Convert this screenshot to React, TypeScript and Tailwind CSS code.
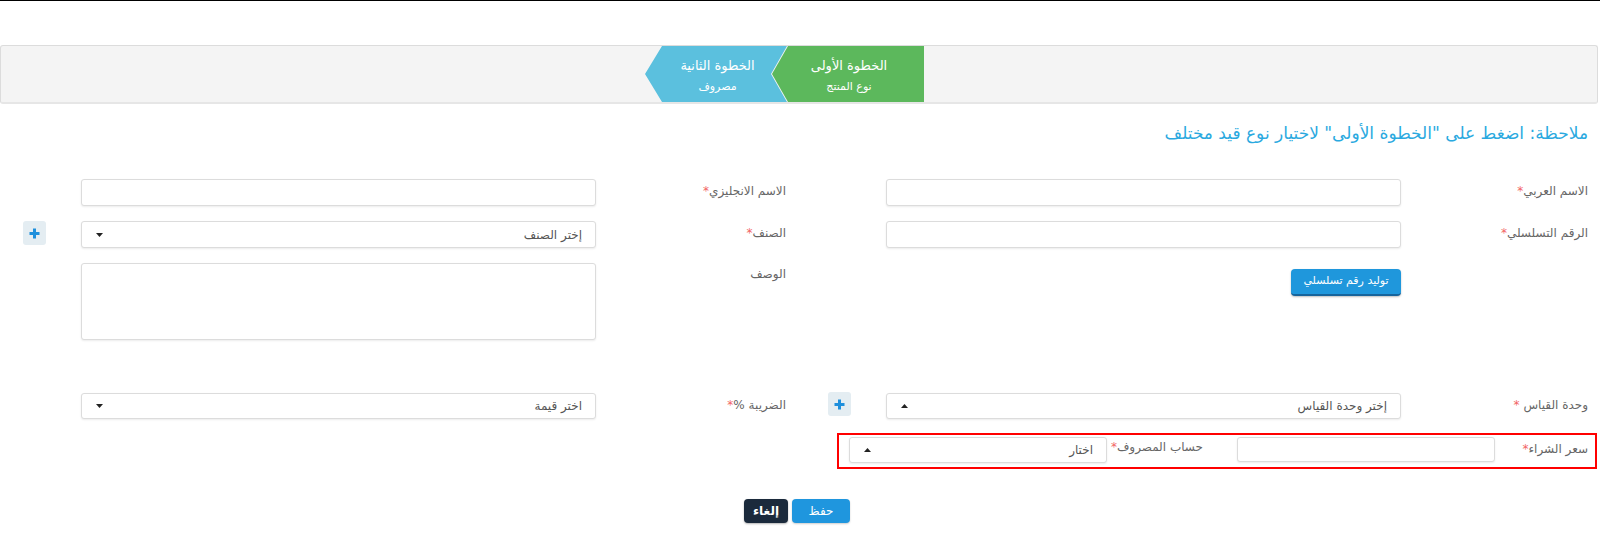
import React from "react";

const Star = () => <span className="text-[#f26464]">*</span>;

function Caret({ up }: { up?: boolean }) {
  return (
    <svg width="7" height="4" viewBox="0 0 7 4" className="block">
      {up ? <polygon points="0,4 7,4 3.5,0" fill="#222" /> : <polygon points="0,0 7,0 3.5,4" fill="#222" />}
    </svg>
  );
}

function Plus() {
  return (
    <div className="w-[23px] h-[24px] rounded-[3px] bg-[#e4edf2] flex items-center justify-center">
      <svg width="11" height="11" viewBox="0 0 11 11">
        <path d="M5.5 0.5 V10.5 M0.5 5.5 H10.5" stroke="#1e8fdc" strokeWidth="3" />
      </svg>
    </div>
  );
}

const inputCls =
  "bg-white border border-[#dcdcdc] rounded-[3px] shadow-[0_1px_2px_rgba(0,0,0,0.08)]";

function Select({ text, up, w, h }: { text: string; up?: boolean; w: string; h: string }) {
  return (
    <div className={`${inputCls} ${w} ${h} flex items-center justify-between pr-[13px] pl-[14px]`}>
      <span className="text-[12px] text-[#555]">{text}</span>
      <Caret up={up} />
    </div>
  );
}

function Label({ children, className }: { children: React.ReactNode; className: string }) {
  return <div className={`text-[12px] text-[#666] shrink-0 whitespace-nowrap ${className}`}>{children}</div>;
}

export default function App() {
  return (
    <div
      dir="rtl"
      className="w-[1600px] h-[551px] bg-white overflow-hidden font-['DejaVu_Sans',sans-serif] text-[#555]"
    >
      <div className="h-[1px] bg-black" />
      <div className="h-[44px]" />
      {/* steps bar */}
      <div className="h-[59px] mr-[2px] border border-[#dcdcdc] border-b-[2px] border-b-[#e6e6e6] rounded-[3px] bg-[#f4f4f4] flex">
        <div className="w-[673px] shrink-0" />
        <div className="w-[152px] shrink-0 h-full bg-[#5cb85c] [clip-path:polygon(16px_0,100%_0,100%_100%,16px_100%,0_50%)] flex flex-col items-center justify-center text-white pl-[2px] pt-[3px]">
          <div className="text-[13px] font-medium leading-[18px]">الخطوة الأولى</div>
          <div className="text-[11px] leading-[16px] mt-[4px]">نوع المنتج</div>
        </div>
        <div className="w-[143px] shrink-0 -mr-[16px] h-full bg-[#5bc0de] [clip-path:polygon(17px_0,142px_0,126px_50%,142px_100%,17px_100%,0_50%)] flex flex-col items-center justify-center text-white pl-[2px] pt-[3px]">
          <div className="text-[13px] font-medium leading-[18px]">الخطوة الثانية</div>
          <div className="text-[11px] leading-[16px] mt-[4px]">مصروف</div>
        </div>
      </div>

      {/* note */}
      <div className="mt-[17px] pr-[12px] text-[17px] leading-[24px] text-[#2aa9e0]">
        ملاحظة: اضغط على "الخطوة الأولى" لاختيار نوع قيد مختلف
      </div>

      {/* row 1 */}
      <div className="flex mt-[34px] h-[27px]">
        <Label className="w-[199px] pr-[12px] pt-[3px]">
          الاسم العربي<Star />
        </Label>
        <div className={`${inputCls} w-[515px] h-[27px] shrink-0`} />
        <div className="w-[86px] shrink-0" />
        <Label className="w-[204px] pr-[14px] pt-[3px]">
          الاسم الانجليزي<Star />
        </Label>
        <div className={`${inputCls} w-[515px] h-[27px] shrink-0`} />
      </div>

      {/* row 2 */}
      <div className="flex mt-[15px] h-[27px]">
        <Label className="w-[199px] pr-[12px] pt-[3px]">
          الرقم التسلسلي<Star />
        </Label>
        <div className={`${inputCls} w-[515px] h-[27px] shrink-0`} />
        <div className="w-[86px] shrink-0" />
        <Label className="w-[204px] pr-[14px] pt-[3px]">
          الصنف<Star />
        </Label>
        <Select text="إختر الصنف" w="w-[515px] shrink-0" h="h-[27px]" />
        <div className="w-[81px] shrink-0 pr-[35px]">
          <Plus />
        </div>
      </div>

      {/* row 3 */}
      <div className="flex mt-[15px] h-[77px]">
        <div className="w-[199px] shrink-0" />
        <div className="w-[515px] shrink-0 pt-[4px]">
          <button className="w-[110px] h-[27px] rounded-[4px] bg-[#1f97dc] border-b-[2px] border-[#16649c] text-white text-[11px] whitespace-nowrap tracking-tight shadow-[0_1px_2px_rgba(0,0,0,0.25)]">
            توليد رقم تسلسلي
          </button>
        </div>
        <div className="w-[86px] shrink-0" />
        <Label className="w-[204px] pr-[14px] pt-[2px]">الوصف</Label>
        <div className={`${inputCls} w-[515px] h-[77px] shrink-0`} />
      </div>

      {/* row 4 */}
      <div className="flex mt-[53px] h-[26px]">
        <Label className="w-[199px] pr-[12px] pt-[3px]">
          وحدة القياس <Star />
        </Label>
        <Select text="إختر وحدة القياس" up w="w-[515px] shrink-0" h="h-[26px]" />
        <div className="w-[86px] shrink-0 pr-[35px] -mt-[1px]">
          <Plus />
        </div>
        <Label className="w-[204px] pr-[14px] pt-[3px]">
          الضريبة %<Star />
        </Label>
        <Select text="اختر قيمة" w="w-[515px] shrink-0" h="h-[26px]" />
      </div>

      {/* highlighted row */}
      <div className="flex mt-[14px]">
        <div className="w-[3px] shrink-0" />
        <div className="w-[760px] h-[36px] shrink-0 border-2 border-[#ff0000] flex pt-[2px]">
          <Label className="w-[100px] pr-[7px] pt-[3px]">
            سعر الشراء<Star />
          </Label>
          <div className={`${inputCls} w-[258px] h-[25px] shrink-0`} />
          <Label className="w-[130px] pr-[34px] pt-[1px]">
            حساب المصروف<Star />
          </Label>
          <Select text="اختار" up w="w-[258px] shrink-0" h="h-[26px]" />
        </div>
      </div>

      {/* buttons */}
      <div className="flex justify-center gap-[4px] mt-[30px] pr-[6px]">
        <button className="w-[58px] h-[24px] rounded-[4px] bg-[#1f96de] text-white text-[12px] shadow-[0_1px_2px_rgba(0,0,0,0.2)]">
          حفظ
        </button>
        <button className="w-[44px] h-[24px] rounded-[4px] bg-[#1b2a3c] text-white text-[12px] font-semibold shadow-[0_1px_2px_rgba(0,0,0,0.3)]">
          إلغاء
        </button>
      </div>
    </div>
  );
}
